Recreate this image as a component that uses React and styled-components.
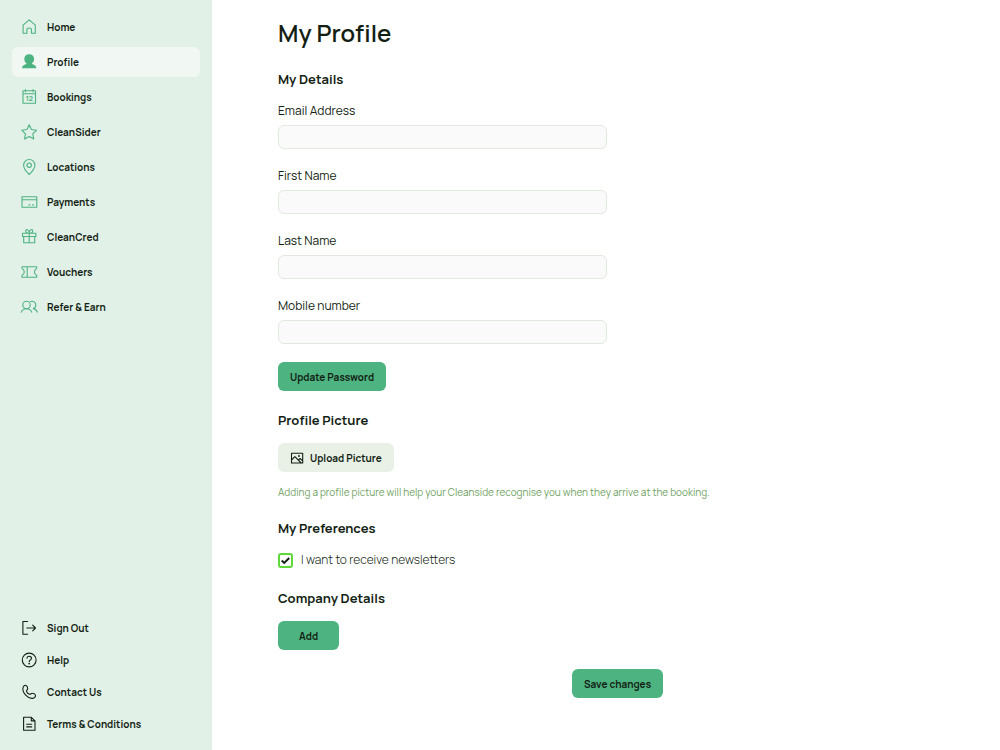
import React from "react";
import styled, { createGlobalStyle } from "styled-components";

const GlobalStyle = createGlobalStyle`
  *, *::before, *::after { box-sizing: border-box; }
  body {
    margin: 0;
    background: #fff;
    color: #141f14;
    font-family: Manrope, Inter, "Liberation Sans", sans-serif;
  }
  h1, h2, p, ul { margin: 0; padding: 0; }
  button, input { font: inherit; color: inherit; }
`;

const Page = styled.div`
  display: flex;
  min-height: 100vh;
`;

const Sidebar = styled.nav`
  flex: 0 0 212px;
  display: flex;
  flex-direction: column;
  justify-content: space-between;
  gap: 24px;
  padding: 12px 12px 15px;
  background: #e1f1e7;
`;

const NavList = styled.ul`
  display: flex;
  flex-direction: column;
  gap: ${(p) => (p.$compact ? "10px" : "5px")};
  list-style: none;
`;

const NavLink = styled.a`
  display: flex;
  align-items: center;
  gap: 9px;
  height: ${(p) => (p.$compact ? "22px" : "30px")};
  padding: 0 8px;
  border-radius: 6px;
  background: ${(p) => (p.$active ? "#f1f8f4" : "transparent")};
  color: #141f14;
  font-size: 10px;
  font-weight: 700;
  line-height: 16px;
  text-decoration: none;
  white-space: nowrap;
`;

const Icon = styled.svg`
  flex: none;
  width: ${(p) => p.$size || "18px"};
  height: ${(p) => p.$size || "18px"};
  fill: none;
  stroke: ${(p) => p.$color};
  stroke-width: 1.1;
  stroke-linecap: round;
  stroke-linejoin: round;
`;

const IconText = styled.text`
  fill: #4cb381;
  stroke: none;
  font-size: 7px;
  font-weight: 700;
  text-anchor: middle;
`;

const Main = styled.main`
  flex: 1;
  min-width: 0;
  padding: 17px 43px 52px 66px;
`;

const Title = styled.h1`
  margin-bottom: 20px;
  font-size: 24px;
  line-height: 32px;
  font-weight: 600;
`;

const Form = styled.form`
  display: flex;
  flex-direction: column;
  gap: 19px;
`;

const Section = styled.section`
  display: flex;
  flex-direction: column;
  align-items: flex-start;
  gap: 13px;
`;

const SectionTitle = styled.h2`
  font-size: 13px;
  line-height: 20px;
  font-weight: 700;
`;

const Fields = styled.div`
  display: flex;
  flex-direction: column;
  align-items: flex-start;
  gap: 18px;
  width: 100%;
  max-width: 329px;
`;

const Field = styled.div`
  display: flex;
  flex-direction: column;
  gap: 5px;
  width: 100%;
`;

const Label = styled.label`
  font-size: 12px;
  line-height: 18px;
`;

const TextInput = styled.input`
  width: 100%;
  height: 24px;
  padding: 0 8px;
  border: 1px solid #e1eadf;
  border-radius: 6px;
  background: #fafafa;
  font-size: 12px;
`;

const Button = styled.button`
  display: inline-flex;
  align-items: center;
  justify-content: center;
  gap: 6px;
  height: 29px;
  padding: 0 ${(p) => (p.$wide ? "21px" : "12px")};
  border: 0;
  border-radius: 6px;
  background: ${(p) => (p.$soft ? "#e9f1e7" : "#4cb381")};
  font-size: 10px;
  font-weight: 700;
  white-space: nowrap;
  cursor: pointer;
`;

const Hint = styled.p`
  color: #6f9f62;
  font-size: 10px;
  line-height: 14px;
  font-weight: 400;
`;

const CheckRow = styled.label`
  display: flex;
  align-items: center;
  gap: 8px;
  font-size: 12px;
  line-height: 18px;
  font-weight: 300;
`;

const CheckWrap = styled.span`
  position: relative;
  display: flex;
`;

const Checkbox = styled.input`
  appearance: none;
  width: 15px;
  height: 15px;
  margin: 0;
  border: 2px solid #5fd83a;
  border-radius: 3px;
  background: #fff;
  &:not(:checked) + svg { display: none; }
`;

const CheckMark = styled.svg`
  position: absolute;
  inset: 0;
  fill: none;
  stroke: #141f14;
  stroke-width: 2;
  pointer-events: none;
`;

const Actions = styled.div`
  display: flex;
  justify-content: center;
`;

const mainLinks = [
  ["Home", <path d="M3.1 15.3V7.1L9.2 1.8l6.1 5.3v8.2h-3.8v-3.4c0-1.3-.8-1.9-2.3-1.9s-2.3.6-2.3 1.9v3.4z" />],
  ["Profile", <path fill="#4cb381" stroke="none" d="M9.2 1.2c3 0 4.900 2 4.900 4.800 0 1.900-.8 3.400-2.100 4.200v.8c2.700.7 4.200 2 4.400 4.300H2c.2-2.300 1.700-3.600 4.400-4.300v-.8C5.100 9.400 4.300 7.900 4.300 6c0-2.800 1.900-4.800 4.900-4.800z" />],
  ["Bookings", <><path d="M3 2.800h12.500v12.400H3zM3 5.700h12.500M5.500 1.500v2.300M13 1.500v2.300" /><IconText x="9.300" y="13.300">12</IconText></>],
  ["CleanSider", <path d="M9.200 1.800l2.200 4.700 5.200.7-3.800 3.600.9 5.100-4.500-2.500-4.600 2.500.9-5.100L1.800 7.200l5.200-.7z" />],
  ["Locations", <><path d="M9.200 16.500C5.600 13 3.600 10 3.600 7.200a5.650 5.650 0 0 1 11.300 0c0 2.800-2.100 5.800-5.700 9.300z" /><circle cx="9.200" cy="7.200" r="2.200" /></>],
  ["Payments", <><path d="M2 3.800h14.800v10.400H2zM2 6.800h14.800" /><path strokeDasharray="1.800 1.800" strokeLinecap="butt" d="M8.500 11.900h6" /></>],
  ["CleanCred", <><path d="M2.500 5.300h13.400v3.200H2.500zM3.700 8.500h11v6.200h-11zM9.200 5.300v9.400M9.200 5.300C6.700 5.300 5.700 4.200 5.700 3c0-2.300 3.500-2 3.500 2.300 0-4.300 3.500-4.600 3.500-2.300 0 1.200-1 2.300-3.500 2.300z" /></>],
  ["Vouchers", <path d="M2 3.700h14.700v1.900c-3 1-3 5.700 0 6.700v1.900H2v-1.900c3-1 3-5.700 0-6.700zM7.200 3.700v10.500" />],
  ["Refer & Earn", <><circle cx="6.500" cy="7" r="3.700" /><path d="M1.300 14.100c.7-2.300 2.300-3.400 5.200-3.400s4.500 1.100 5.200 3.400M10.400 3.500c2.800-1 5.400.8 5.400 3.500 0 1.700-.9 3-2.400 3.500M13.400 10.600c2 .3 3.300 1.400 3.900 3.500" /></>],
];

const footerLinks = [
  ["Sign Out", <path d="M7.600 2.500H2.900v12.800h4.700M6.800 9h8.700M12.700 6.200L15.500 9l-2.800 2.800" />],
  ["Help", <><circle cx="9.200" cy="9" r="6.900" /><path d="M7 7.300c0-2.900 4.500-2.700 4.500 0 0 1.700-2.300 1.600-2.300 3.300" /><circle cx="9.200" cy="12.600" r=".35" /></>],
  ["Contact Us", <path d="M3.200 4.100C3.800 2.600 5.200 2 6.100 2.500c1 .6 1.600 2.200 1.600 3.200 0 .9-1.300 1.400-1.200 2.300.2 1.200 1.900 3 3.200 3.300 1 .2 1.700-1.100 2.700-1 1.100.1 2.900 1.200 3.100 2.100.3 1.100-1 2.500-2.200 2.800C8.200 16.400 1.400 9.400 3.200 4.100z" />],
  ["Terms & Conditions", <path d="M3.600 2.300h7.700l3.700 3.600v9.400H3.600zM11.300 2.300v3.600H15M6.700 9.300h5M6.700 11.900h5" />],
];

const fields = [
  ["email", "Email Address", "email"],
  ["first-name", "First Name", "text"],
  ["last-name", "Last Name", "text"],
  ["mobile", "Mobile number", "tel"],
];

function Links({ items, compact, color, active }) {
  return (
    <NavList $compact={compact}>
      {items.map(([name, drawing]) => (
        <li key={name}>
          <NavLink
            href="#"
            $compact={compact}
            $active={name === active}
            aria-current={name === active ? "page" : undefined}
          >
            <Icon $color={color} viewBox="0 0 18 18" aria-hidden="true">{drawing}</Icon>
            {name}
          </NavLink>
        </li>
      ))}
    </NavList>
  );
}

export default function App() {
  return (
    <>
      <GlobalStyle />
      <Page>
        <Sidebar>
          <Links items={mainLinks} color="#4cb381" active="Profile" />
          <Links items={footerLinks} color="#141f14" compact />
        </Sidebar>
        <Main>
          <Title>My Profile</Title>
          <Form onSubmit={(e) => e.preventDefault()}>
            <Section>
              <SectionTitle>My Details</SectionTitle>
              <Fields>
                {fields.map(([id, label, type]) => (
                  <Field key={id}>
                    <Label htmlFor={id}>{label}</Label>
                    <TextInput id={id} type={type} />
                  </Field>
                ))}
                <Button type="button">Update Password</Button>
              </Fields>
            </Section>
            <Section>
              <SectionTitle>Profile Picture</SectionTitle>
              <Button type="button" $soft>
                <Icon $color="#141f14" $size="14px" viewBox="0 0 14 14" aria-hidden="true">
                  <path d="M1.500 2.200h11.200v9.800H1.500zM1.500 9l3.400-3.300 6.300 6.300M8.300 9.100l1.800-1.600 2.600 2.300" />
                  <circle cx="9" cy="5" r=".4" />
                </Icon>
                Upload Picture
              </Button>
              <Hint>
                Adding a profile picture will help your Cleanside recognise you when they arrive at the booking.
              </Hint>
            </Section>
            <Section>
              <SectionTitle>My Preferences</SectionTitle>
              <CheckRow>
                <CheckWrap>
                  <Checkbox type="checkbox" defaultChecked />
                  <CheckMark width="15" height="15" viewBox="0 0 15 15" aria-hidden="true">
                    <path d="M3.700 7.500l2.500 2.400 5-4.900" />
                  </CheckMark>
                </CheckWrap>
                I want to receive newsletters
              </CheckRow>
            </Section>
            <Section>
              <SectionTitle>Company Details</SectionTitle>
              <Button type="button" $wide>Add</Button>
            </Section>
            <Actions>
              <Button type="submit">Save changes</Button>
            </Actions>
          </Form>
        </Main>
      </Page>
    </>
  );
}
